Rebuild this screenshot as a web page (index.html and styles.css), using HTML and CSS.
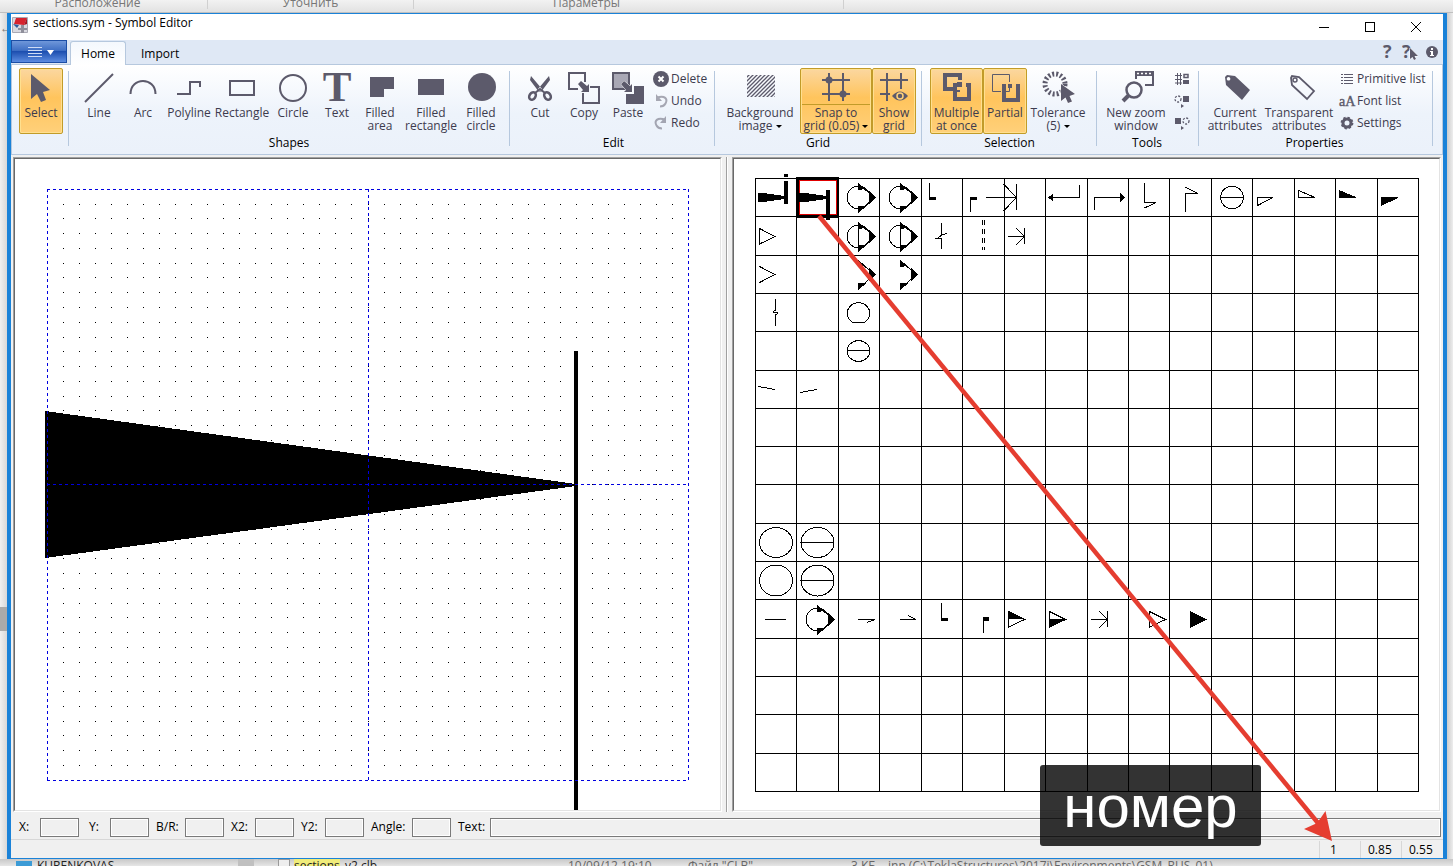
FILE: index.html
```html
<!DOCTYPE html>
<html lang="en">
<head>
<meta charset="utf-8">
<title>sections.sym - Symbol Editor</title>
<link rel="stylesheet" href="styles.css">
</head>
<body>
<svg class="defs" aria-hidden="true">
  <defs>
    <pattern id="hatch" width="4" height="4" patternUnits="userSpaceOnUse"><path d="M-1 5L5-1M-1 1L1-1M3 5L5 3" stroke="#5c5a6b" stroke-width="1.3"/></pattern>
    <g id="pointer"><circle cx="858.5" cy="197.5" r="11.3"/><use href="#chevron"/></g>
    <g id="chevron"><path d="M859 184L874 197.5 859 211.500"/><path class="fill" d="M858 183l8 6-8 1zM869 191l6.500 6.500-6.500 6.500zM858 213l8-6.500-8-1z"/></g>
    <g id="stop"><path d="M0 8.500H16.500M16.500 0V16M8 0L16.500 8.500 8 17"/></g>
  </defs>
</svg>

<div class="backdrop-top"><span>Расположение</span><span>Уточнить</span><span>Параметры</span></div>

<div class="desktop">
<div class="backdrop-left">←</div>
<main class="window">
  <header class="titlebar">
    <svg class="logo" width="16" height="16" viewBox="0 0 16 16"><path fill="#d9d9e0" stroke="#a9a9b4" d="M.5.5h15v15H.5z"/><path fill="#d6232e" d="M4 1h11l-3 7-10-1z"/><path fill="#a3121f" d="M12 8l3-7v6z"/><path fill="#2c5b9d" d="M1 7l6 1-2 3z"/><path fill="#8f8f9b" d="M9 8h3v3h3v2h-3v3h-3v-3H6v-2h3z"/></svg>
    <h1>sections.sym - Symbol Editor</h1>
    <div class="controls">
      <button aria-label="Minimize"><svg width="12" height="12"><path d="M1 6.500h10"/></svg></button>
      <button aria-label="Maximize"><svg width="12" height="12"><path d="M1.500 1.500h9v9h-9z"/></svg></button>
      <button aria-label="Close"><svg width="12" height="12"><path d="M1 1l10 10M11 1L1 11" shape-rendering="auto"/></svg></button>
    </div>
  </header>

  <nav class="tabs">
    <button class="app-menu" aria-label="Application menu"><svg width="28" height="12" viewBox="0 0 28 12"><path d="M0 1.500h14M0 4.500h14M0 7.500h14M0 10.500h14" stroke="#cfdcf5"/><path d="M19 4h7l-3.500 5z" fill="#fff"/></svg></button>
    <button class="tab active">Home</button>
    <button class="tab">Import</button>
    <div class="help">
      <button aria-label="Help"><svg width="14" height="16" viewBox="0 0 14 16"><text x="2" y="14" class="bold-glyph">?</text></svg></button>
      <button aria-label="Context help"><svg width="16" height="16" viewBox="0 0 16 16"><text x="0" y="14" class="bold-glyph">?</text><path class="halo" d="M8 4v11l2.500-2 1.500 3 2-1-1.500-3H16z"/></svg></button>
      <button aria-label="About"><svg width="14" height="16" viewBox="0 0 14 16"><circle class="f" cx="7" cy="8" r="6"/><path fill="#fff" d="M6 4h2v2H6zM5 7h3v4h1v1H5v-1h1V8H5z"/></svg></button>
    </div>
  </nav>

  <section class="ribbon">
    <div class="group g-select"><div class="items">
      <button class="big w44 on"><svg viewBox="0 0 36 34"><path class="f" d="M8 4V29L14 24 18 32 23 30 20 22 27 20z"/></svg><span>Select</span></button>
    </div></div>
    <div class="group g-shapes"><div class="items">
      <button class="big w44"><svg viewBox="0 0 36 34"><path d="M4 32L32 4"/></svg><span>Line</span></button>
      <button class="big w44"><svg viewBox="0 0 36 34"><path d="M5.500 24C5.500 6.500 30.500 6.500 30.500 24"/></svg><span>Arc</span></button>
      <button class="big w48"><svg viewBox="0 0 36 34"><path d="M6 24H19V12H29V17"/></svg><span>Polyline</span></button>
      <button class="big w58"><svg viewBox="0 0 36 34"><path d="M6 11H30V25H6z"/></svg><span>Rectangle</span></button>
      <button class="big w44"><svg viewBox="0 0 36 34"><circle cx="18" cy="18" r="13"/></svg><span>Circle</span></button>
      <button class="big w44"><svg viewBox="0 0 36 34"><text x="18" y="31" class="serif-glyph">T</text></svg><span>Text</span></button>
      <button class="big w42"><svg viewBox="0 0 36 34"><path class="f" d="M8 7H32V19H22V27H8z"/></svg><span>Filled<br>area</span></button>
      <button class="big w60"><svg viewBox="0 0 36 34"><path class="f" d="M5 9H31V25H5z"/></svg><span>Filled<br>rectangle</span></button>
      <button class="big w40"><svg viewBox="0 0 36 34"><circle class="f" cx="19" cy="17" r="14"/></svg><span>Filled<br>circle</span></button>
    </div><h2>Shapes</h2></div>
    <div class="group g-edit"><div class="items">
      <button class="big w44"><svg viewBox="0 0 36 34"><path class="f" d="M9 6L8 10 17 22 20 19zM27 6L28 10 19 22 16 19z"/><ellipse cx="10.500" cy="26" rx="3" ry="4" transform="rotate(35 10.500 26)" stroke-width="2.500"/><ellipse cx="25.500" cy="26" rx="3" ry="4" transform="rotate(-35 25.500 26)" stroke-width="2.500"/><path d="M13 23l5-4 5 4"/></svg><span>Cut</span></button>
      <button class="big w44"><svg viewBox="0 0 36 34"><path d="M12 19H3V3H19V12M24 17H33V33H17V23"/><path class="f" d="M12 14l3-3 6 5 2-2v8h-8l2-2z"/></svg><span>Copy</span></button>
      <button class="big w44"><svg viewBox="0 0 36 34"><path d="M3 3H19V19H3z" fill="#a9a8b5"/><path class="f" d="M24 16H34V34H16V24H24z"/><path class="halo" d="M11 14l3-3 6 5 2-2v8h-8l2-2z"/></svg><span>Paste</span></button>
      <div class="stack">
        <button class="small"><svg viewBox="0 0 16 16"><circle class="f" cx="8" cy="8" r="8"/><path d="M5.500 5.500l5 5M10.500 5.500l-5 5" stroke="#fff"/></svg>Delete</button>
        <button class="small dim"><svg viewBox="0 0 16 16"><path d="M4 4.500C12 2 15 6 12.500 10.500 11.500 12.500 9.500 13.500 7 13.500" /><path class="f" d="M3 1v7h6z"/></svg>Undo</button>
        <button class="small dim"><svg viewBox="0 0 16 16"><path d="M12 4.500C4 2 1 6 3.500 10.500 4.500 12.500 6.500 13.500 9 13.500" /><path class="f" d="M13 1v7H7z"/></svg>Redo</button>
      </div>
    </div><h2>Edit</h2></div>
    <div class="group g-grid"><div class="items">
      <button class="big w80"><svg viewBox="0 0 36 34"><path d="M5 5H33V27H5z" fill="url(#hatch)" stroke="none"/></svg><span>Background<br>image <i class="caret"></i></span></button>
      <button class="big w72 on split"><svg viewBox="0 0 36 34"><path d="M11 3V31M25 3V31M4 10H32M4 24H32"/><circle class="f" cx="11" cy="10" r="3.500"/><circle class="f" cx="25" cy="24" r="3.500"/></svg><span>Snap to<br>grid (0.05) <i class="caret"></i></span></button>
      <button class="big w44 on"><svg viewBox="0 0 36 34"><path d="M11 3V31M25 3V19M4 10H32M4 24H14"/><path class="f" d="M16 26Q24 17 32 26 24 35 16 26z"/><circle cx="24" cy="26" r="3" stroke="#ffd27a" stroke-width="1.500"/></svg><span>Show<br>grid</span></button>
    </div><h2>Grid</h2></div>
    <div class="group g-selection"><div class="items">
      <button class="big w53 on"><svg viewBox="0 0 36 34"><g stroke-width="4"><path d="M14 19H6V5H21V10"/><path d="M18 15H16V29H30V15H27"/></g><path class="f" d="M18 12h5v5h-5z"/><path d="M21 21h-4"/></svg><span>Multiple<br>at once</span></button>
      <button class="big w44 on"><svg viewBox="0 0 36 34"><path d="M14 21.500H5.500V4.500H22.500V12" stroke-width="1"/><path d="M19 16H17V30H31V16H29" stroke-width="4"/><path class="f" d="M21 14h4v4h-4z"/><path d="M15 21.500h7.500V14" stroke-width="1"/></svg><span>Partial</span></button>
      <button class="big w62"><svg viewBox="0 0 36 34"><circle cx="15" cy="14" r="10" stroke-width="5" stroke-dasharray="2 2"/><path class="halo" d="M21 14V31L25.500 27.500 28 33 32 31.500 29.500 26 35 24z"/></svg><span>Tolerance<br>(5) <i class="caret"></i></span></button>
    </div><h2>Selection</h2></div>
    <div class="group g-tools"><div class="items">
      <button class="big w64"><svg viewBox="0 0 36 34"><path d="M18 9V2H35V15H27"/><path class="f" d="M17 1H36V6H17z"/><path d="M19 3.500h14" stroke="#fff" stroke-width="1.500" stroke-dasharray="2 2"/><circle cx="16" cy="20" r="7.500" stroke-width="2.500"/><path d="M10.500 25.500L5 31" stroke-width="4"/></svg><span>New zoom<br>window</span></button>
      <div class="stack icons">
        <button class="small" aria-label="Align to grid"><svg viewBox="0 0 16 16"><path d="M3.500 2v12M6.500 2v12M1 4.500h7M1 8.500h7M1 12h7" stroke-width="1"/><path d="M10 3.500h4v3h-4z" stroke-width="1.500"/><path class="f" d="M9 9h6v4H9z"/></svg></button>
        <button class="small" aria-label="Send to back"><svg viewBox="0 0 16 16"><circle cx="4" cy="6" r="3" stroke-width="1.300" stroke-dasharray="2 1.500"/><path class="f" d="M9 3h6v6H9zM7 11l3 2-3 2z"/></svg></button>
        <button class="small" aria-label="Bring to front"><svg viewBox="0 0 16 16"><circle cx="12" cy="6" r="3" stroke-width="1.300" stroke-dasharray="2 1.500"/><path class="f" d="M1 3h6v6H1zM7 11l3 2-3 2z"/></svg></button>
      </div>
    </div><h2>Tools</h2></div>
    <div class="group g-properties"><div class="items">
      <button class="big w58"><svg viewBox="0 0 36 34"><path class="f" fill-rule="evenodd" d="M8 7L10 5 18 6 33 20 25 30 9 15zM11.500 7a1.800 1.800 0 1 0 .1 0z"/></svg><span>Current<br>attributes</span></button>
      <button class="big w70"><svg viewBox="0 0 36 34"><path d="M10 8L11 6 18 7 33 21 26 29 11 15z" stroke-width="1.800"/><circle cx="14" cy="10" r="2" stroke-width="1.500"/></svg><span>Transparent<br>attributes</span></button>
      <div class="stack">
        <button class="small"><svg viewBox="0 0 16 16"><path d="M2 3.500h2M2 6.500h2M2 9.500h2M2 12.500h2M5 3.500h9M5 6.500h9M5 9.500h9M5 12.500h9" stroke-width="1"/></svg>Primitive list</button>
        <button class="small"><svg viewBox="0 0 16 16"><text x="0" y="13" class="aa-glyph">aA</text></svg>Font list</button>
        <button class="small"><svg viewBox="0 0 16 16"><circle cx="8" cy="8" r="4" stroke-width="3"/><circle cx="8" cy="8" r="5.500" stroke-width="1.800" stroke-dasharray="2.300 2"/></svg>Settings</button>
      </div>
    </div><h2>Properties</h2></div>
  </section>

  <section class="workspace">
    <div class="panel"><svg id="editor" viewBox="15 159 705 651" preserveAspectRatio="xMinYMin meet" shape-rendering="crispEdges">
      <path id="dots"/>
      <path d="M45 411V558L576 486V484z"/>
      <path d="M574 351h4V810h-4z"/>
      <path class="guide" d="M47 189.500H689M47 484.500H689M47 780.500H689M47.500 189V781M368.500 189V781M688.500 189V781"/>
    </svg></div>
    <div class="splitter"></div>
    <div class="panel"><svg id="library" viewBox="734 159 705 651" preserveAspectRatio="xMinYMin meet" shape-rendering="crispEdges">
      <path id="cells"/>
      <!-- row 1 -->
      <path class="fill" d="M758 193h6l20 3v3l-20 3h-6zM784 181h4v23h-4zM784 174h4v3h-4z"/>
      <path d="M797.500 178.500H837.500V216.500H797.500z" stroke-width="3"/>
      <path d="M799.500 180.500H836.500V214.500H799.500z" class="picked"/>
      <path class="fill" d="M798 193h8l20 3v3l-20 3h-8zM826 190h4v30h-4z"/>
      <use href="#pointer"/><use href="#pointer" x="42"/>
      <path d="M929.500 183V199M970.500 197V212M986 197.500H1016M1016.500 184V210M1003.500 184L1016.500 197.500 1003.500 211"/>
      <path class="fill" d="M929 197h7v3h-7zM970 197h7v3h-7z"/>
      <path d="M1050 197.500H1079.500V185M1094.500 210V197.500H1123M1144.500 183V202.500H1156L1144.500 208M1185.500 212V193.500H1198L1185 187"/>
      <path class="fill" d="M1048 197.500l5-4v8zM1125 197.500l-5-4.500v9z"/>
      <circle cx="1232" cy="197.500" r="11.300"/><path d="M1221 197.500h22"/>
      <path d="M1257.500 197.500H1273L1257.500 205.500zM1298.500 190.500V197.500H1315z"/>
      <path class="fill" d="M1339 190v8h17v-1zM1381 197h17v1l-17 8z"/>
      <!-- row 2 -->
      <path d="M759.500 228.500L775 236.500 759.500 244z"/>
      <use href="#pointer" y="39"/><use href="#pointer" x="42" y="39"/><path d="M858.500 223V251M900.500 223V251"/>
      <path d="M941.500 223V234.500L938 238M935 238.500H941.500V249M938 238L942 235 947 233.500"/>
      <path d="M982.500 220V250M984.500 220V250" stroke-dasharray="5 4"/>
      <use href="#stop" x="1008" y="228"/>
      <!-- rows 3 to 6 -->
      <path d="M759.500 266.500L775 274.500 759.500 282.500"/>
      <use href="#chevron" y="77"/><use href="#chevron" x="42" y="77"/>
      <path d="M775.500 299V310L773 312 778 313 775.500 315V326"/>
      <path d="M853 322.500A11.300 10.500 0 1 1 864 322.500z"/>
      <ellipse cx="858.500" cy="351" rx="11.300" ry="10.500"/><path d="M847 350.500h23"/>
      <path d="M758 386.500L775 389.500M800 392.500L817 389.500"/>
      <!-- rows 10 and 11 -->
      <ellipse cx="776" cy="542.500" rx="16.500" ry="15"/><ellipse cx="817.500" cy="542.500" rx="16.500" ry="15"/><path d="M801 542.500h33"/>
      <ellipse cx="776" cy="580.500" rx="16.500" ry="15.500"/><ellipse cx="817.500" cy="580.500" rx="16.500" ry="15.500"/><path d="M801 580.500h33"/>
      <!-- row 12 -->
      <path d="M765 619.500h21M858 619.500h17L867 622.500M900 619.500h16L908 615.500M941.500 603V620M983.500 618V633"/>
      <use href="#pointer" x="-41" y="422"/>
      <path class="fill" d="M941 618h7v3h-7zM983 617h6v4h-6zM1008 611l16 8h-16zM1049 619h16l-16 8zM1190 611v17l17-8.500z"/>
      <path d="M1008.500 611.500l16 8-16 7.500zM1049.500 611.500l16 8-16 7.500zM1149.500 611.500l16 8-16 7.500z"/>
      <use href="#stop" x="1091" y="611"/>
    </svg></div>
  </section>

  <form class="fields">
    <label class="axis first"><span>X:</span><input type="text"></label>
    <label class="axis"><span>Y:</span><input type="text"></label>
    <label class="bulge"><span>B/R:</span><input type="text"></label>
    <label><span>X2:</span><input type="text"></label>
    <label><span>Y2:</span><input type="text"></label>
    <label class="angle"><span>Angle:</span><input type="text"></label>
    <label class="wide"><span>Text:</span><input type="text"></label>
  </form>
  <footer class="status"><span>1</span><span>0.85</span><span>0.55</span></footer>
</main>
<div class="backdrop-right"></div>
</div>

<div class="backdrop-bottom">
  <span class="drive">KURENKOVAS</span><span class="scroll"></span><span class="sheet"></span><span class="file"><mark>sections</mark>_v2.clb</span><span>10/09/12 19:10</span><span>Файл "CLB"</span><span>3 КБ</span><span>inn (C:\TeklaStructures\2017i\Environments\GSM_RUS_01)</span>
</div>

<svg class="arrow" viewBox="0 0 1453 866" preserveAspectRatio="none" aria-hidden="true"><path d="M819 216L1318 823" stroke="#e53d30" stroke-width="4.500"/><path fill="#e53d30" d="M1332 841L1304 829 1315 824 1320 819 1325.500 811z"/></svg>
<div class="callout">номер</div>
<script src="grid.js"></script>
</body>
</html>
```
FILE: grid.js
```javascript
// Snap points of the symbol being edited
let dots = '';
for (let row = 1; row < 40; row++) {
  for (let col = 1; col < 40; col++) {
    dots += `M${Math.round(47 + col * 16.025)} ${Math.round(188.8 + row * 14.775)}h1v1h-1z`;
  }
}
document.getElementById('dots').setAttribute('d', dots);

// 16 x 16 library cells
let cells = '';
for (let i = 0; i <= 16; i++) {
  const x = Math.round(755 + i * 41.44) + 0.5;
  const y = Math.round(178 + i * 38.31) + 0.5;
  cells += `M755 ${y}H1419M${x} 178V792`;
}
document.getElementById('cells').setAttribute('d', cells);
```
FILE: styles.css
```css
* { box-sizing: border-box; }
body {
  margin: 0;
  min-height: 100vh;
  display: flex;
  flex-direction: column;
  position: relative;
  overflow: hidden;
  background: #f0f0f0;
  color: #000;
  font: 12px/14px "Open Sans", "Noto Sans", sans-serif;
}
button, input { font: inherit; color: inherit; }
button { background: none; border: 0; padding: 0; }
h1, h2 { margin: 0; font: inherit; }
.defs { position: absolute; width: 0; height: 0; }

/* programs behind the window */
.backdrop-top {
  height: 13px;
  display: grid;
  grid-template-columns: 208px 206px 430px;
  overflow: hidden;
  background: linear-gradient(#f2f2f2, #e2e2e2);
  border-bottom: 1px solid #c0c0c0;
  color: #777;
  line-height: 6px;
}
.backdrop-top span { height: 9px; border-right: 1px solid #d0d0d0; text-align: center; padding-right: 12px; }
.backdrop-top span:nth-child(2) { padding-right: 0; }
.backdrop-top span:last-child { padding-right: 84px; }
.desktop { flex: 1; display: flex; }
.backdrop-left {
  width: 7px;
  padding-top: 8px;
  overflow: hidden;
  color: #777;
  background: linear-gradient(#aaa, #aaa) 0 594px / 7px 24px no-repeat, linear-gradient(90deg, #f0f0f0, #d8d8d8);
}
.backdrop-right { width: 6px; background: linear-gradient(90deg, #ccc, #eee); }
.backdrop-bottom {
  height: 7px;
  display: grid;
  grid-template-columns: 238px 16px 40px 274px 120px 163px 37px 1fr;
  overflow: hidden;
  background: linear-gradient(#c8c8c8, #e6e6e6);
  color: #666;
  line-height: 14px;
  white-space: nowrap;
}
.drive { padding-left: 21px; margin-left: 16px; color: #222; background: linear-gradient(#3c9bd6, #3c9bd6) 0 2px / 16px 5px no-repeat; }
.scroll { background: #c0c0c0; }
.sheet { margin: 0 4px 0 24px; background: #eee; border: 1px solid #999; }
.file { color: #222; }
mark { background: #f0ec7a; color: inherit; }

.window {
  flex: 1;
  min-width: 0;
  display: flex;
  flex-direction: column;
  border: solid #1a82d8;
  border-width: 1px 4px;
  background: #f0f0f0;
}
.titlebar { height: 26px; display: flex; background: #fff; padding-left: 1px; }
.logo { margin: 3px 5px 0 0; }
.titlebar h1 { line-height: 18px; }
.controls { margin-left: auto; display: flex; padding-right: 4px; }
.controls button { width: 46px; }
.controls svg { display: block; margin: 0 auto; fill: none; stroke: #000; shape-rendering: crispEdges; }

.tabs { height: 24px; display: flex; background: #dfe8f5; }
.app-menu {
  width: 56px;
  height: 23px;
  border: 1px solid #1c4ea5;
  background: linear-gradient(#6f97da, #3f6fc4 45%, #1d4fb0 50%, #5c8ce0);
}
.app-menu svg { display: block; margin: 0 0 0 16px; fill: none; }
.tab { height: 27px; padding: 0 15px; }
.tab.active { width: 56px; height: 24px; margin: 1px 0 0 3px; padding: 0; border: 1px solid #b6c8de; border-bottom: 0; border-radius: 3px 3px 0 0; background: linear-gradient(#f4f8fd, #fff); position: relative; }
.help { margin-left: auto; display: flex; align-items: center; gap: 7px; padding-right: 4px; }
.help svg { display: block; fill: none; }
.bold-glyph { font: bold 18px "Open Sans", sans-serif; fill: #5c5a6b; }
.f { fill: #5c5a6b; stroke: none; }
.halo { fill: #5c5a6b; stroke: #fff; stroke-width: 1; paint-order: stroke; }

.ribbon {
  display: flex;
  height: 91px;
  margin-bottom: 2px;
  border: 1px solid #b6c8de;
  background: linear-gradient(#fff, #edf3fb 55%, #ebf1fa);
  color: #3d3b4e;
}
.group {
  display: flex;
  flex-direction: column;
  padding-top: 3px;
  background: linear-gradient(#b6c8de, #b6c8de) right 6px / 1px 75px no-repeat;
}
.items { display: flex; height: 66px; }
.group h2 { color: #000; text-align: center; line-height: 18px; }
.g-select { padding-left: 7px; padding-right: 6px; }
.g-shapes { padding-left: 8px; padding-right: 9px; }
.g-edit { padding-left: 8px; padding-right: 6px; }
.g-grid { padding-left: 5px; padding-right: 6px; }
.g-selection { padding-left: 8px; padding-right: 8px; }
.g-tools { padding-left: 7px; padding-right: 9px; }
.g-properties { padding-left: 7px; padding-right: 10px; }
.big {
  height: 66px;
  display: flex;
  flex-direction: column;
  align-items: center;
  justify-content: flex-start;
  gap: 2px;
  padding-top: 2px;
  line-height: 13px;
  white-space: nowrap;
}
.big svg { flex: none; width: 36px; height: 34px; fill: none; stroke: #5c5a6b; stroke-width: 2; }
.on { border: 1px solid #c29b29; border-radius: 2px; padding-top: 1px; background: linear-gradient(#fbd7a0, #ffc45c 45%, #ffd07a); box-shadow: inset 0 0 0 1px #ffe08f; }
.split { background: linear-gradient(#c29b29, #c29b29) 0 35px / 100% 1px no-repeat, linear-gradient(#fbd7a0, #ffc45c 45%, #ffd07a); }
.w40 { width: 40px; } .w42 { width: 42px; } .w44 { width: 44px; } .w48 { width: 48px; }
.w53 { width: 53px; } .w58 { width: 58px; } .w60 { width: 60px; } .w62 { width: 62px; }
.w64 { width: 64px; } .w70 { width: 70px; } .w72 { width: 72px; } .w80 { width: 80px; }
.caret { display: inline-block; border: solid transparent; border-width: 3px 3px 0; border-top-color: #000; vertical-align: 2px; }
.serif-glyph { font: bold 43px "Liberation Serif", serif; fill: #5c5a6b; stroke: none; text-anchor: middle; }
.aa-glyph { font: 14px "Liberation Serif", serif; fill: #5c5a6b; stroke: #5c5a6b; stroke-width: 0.4px; }
.stack { width: 56px; display: flex; flex-direction: column; margin-left: 3px; }
.small { height: 22px; display: flex; align-items: center; gap: 2px; white-space: nowrap; }
.small svg { flex: none; width: 16px; height: 16px; fill: none; stroke: #5c5a6b; stroke-width: 2; overflow: visible; }
.dim svg { opacity: 0.5; }
.stack.icons { width: 16px; margin-left: 6px; }
.g-properties .stack { width: 84px; margin-left: 5px; }

.workspace { flex: 1; display: flex; padding: 0 2px; }
.panel { flex: 1; min-width: 0; display: flex; border: 1px solid; border-color: #a0a0a0 #fff #fff #a0a0a0; background: #fff; }
.panel svg { flex: 1; min-width: 0; border: 1px solid; border-color: #696969 #e3e3e3 #e3e3e3 #696969; }
.splitter { width: 2px; margin: 0 4px; background: #a0a0a0; border-right: 1px solid #fff; }
.guide { fill: none; stroke: #0000e0; stroke-dasharray: 3 3; }
#library { fill: none; stroke: #000; stroke-width: 1; }
.fill { fill: #000; stroke: none; }
#library .picked { stroke: #e00000; }

.fields { height: 27px; display: flex; align-items: center; gap: 7px; padding: 3px 2px 0 8px; }
.fields label { display: flex; align-items: center; }
.fields span { width: 24px; }
.fields .first { margin-right: 3px; }
.fields .axis span { width: 21px; }
.fields .bulge span { width: 29px; }
.fields .angle span { width: 41px; }
.fields .wide { flex: 1; }
.fields .wide span { width: 32px; }
.fields input { width: 39px; height: 19px; border: 1px solid #7a7a7a; background: #f0f0f0; box-shadow: inset 0 0 0 1px #fff; }
.fields .wide input { flex: 1; }
.status { height: 19px; display: flex; justify-content: flex-end; border-top: 1px solid #d7d7d7; padding-right: 1px; }
.status span { width: 41px; margin-top: 1px; border-left: 1px solid #d7d7d7; padding-left: 7px; line-height: 17px; }
.status span:first-child { padding-left: 10px; }

/* annotation */
.arrow { position: absolute; inset: 0; width: 100%; height: 100%; pointer-events: none; fill: none; }
.callout {
  position: absolute;
  right: 192px;
  bottom: 20px;
  width: 221px;
  height: 81px;
  border-radius: 3px;
  background: rgba(0, 0, 0, 0.8);
  color: #fff;
  font: 60px/84px "Liberation Sans", sans-serif;
  text-align: center;
}
```
